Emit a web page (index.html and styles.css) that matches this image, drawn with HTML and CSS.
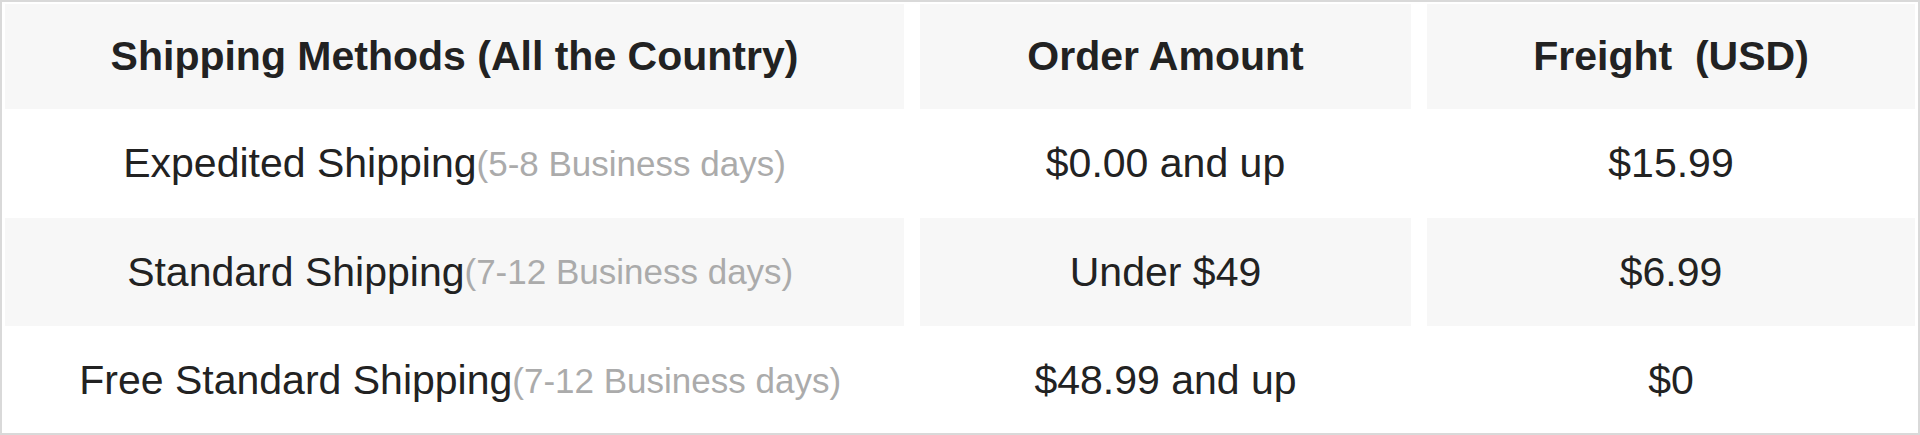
FILE: index.html
```html
<!DOCTYPE html>
<html lang="en">
<head>
<meta charset="utf-8">
<title>Shipping</title>
<link rel="stylesheet" href="styles.css">
</head>
<body>
<div class="ship-table">
  <div class="cell head shade">Shipping Methods (All the Country)</div>
  <div class="cell head shade">Order Amount</div>
  <div class="cell head shade">Freight&nbsp;&nbsp;(USD)</div>

  <div class="cell">Expedited Shipping<span class="days">(5-8 Business days)</span></div>
  <div class="cell">$0.00 and up</div>
  <div class="cell">$15.99</div>

  <div class="cell shade">&nbsp;Standard Shipping<span class="days">(7-12 Business days)</span></div>
  <div class="cell shade">Under $49</div>
  <div class="cell shade">$6.99</div>

  <div class="cell low">&nbsp;Free Standard Shipping<span class="days">(7-12 Business days)</span></div>
  <div class="cell low">$48.99 and up</div>
  <div class="cell low">$0</div>
</div>
</body>
</html>
```

FILE: styles.css
```css
html, body {
  margin: 0;
  padding: 0;
  background: #ffffff;
}

.ship-table {
  box-sizing: border-box;
  width: 1920px;
  height: 435px;
  border: 2px solid #d9d9d9;
  padding: 2px 3px 2px 3px;
  display: grid;
  grid-template-columns: 899px 491px 1fr;
  grid-template-rows: 105px 109px 108px 1fr;
  column-gap: 16px;
  font-family: "Liberation Sans", Arial, Helvetica, sans-serif;
  color: #222222;
}

.cell {
  display: flex;
  align-items: center;
  justify-content: center;
  font-size: 41px;
  white-space: nowrap;
  background: #ffffff;
}

.shade {
  background: #f7f7f7;
}

.head {
  font-weight: bold;
}

.low {
  padding-top: 4px;
}

.days {
  font-size: 35px;
  color: #ababab;
}
```
